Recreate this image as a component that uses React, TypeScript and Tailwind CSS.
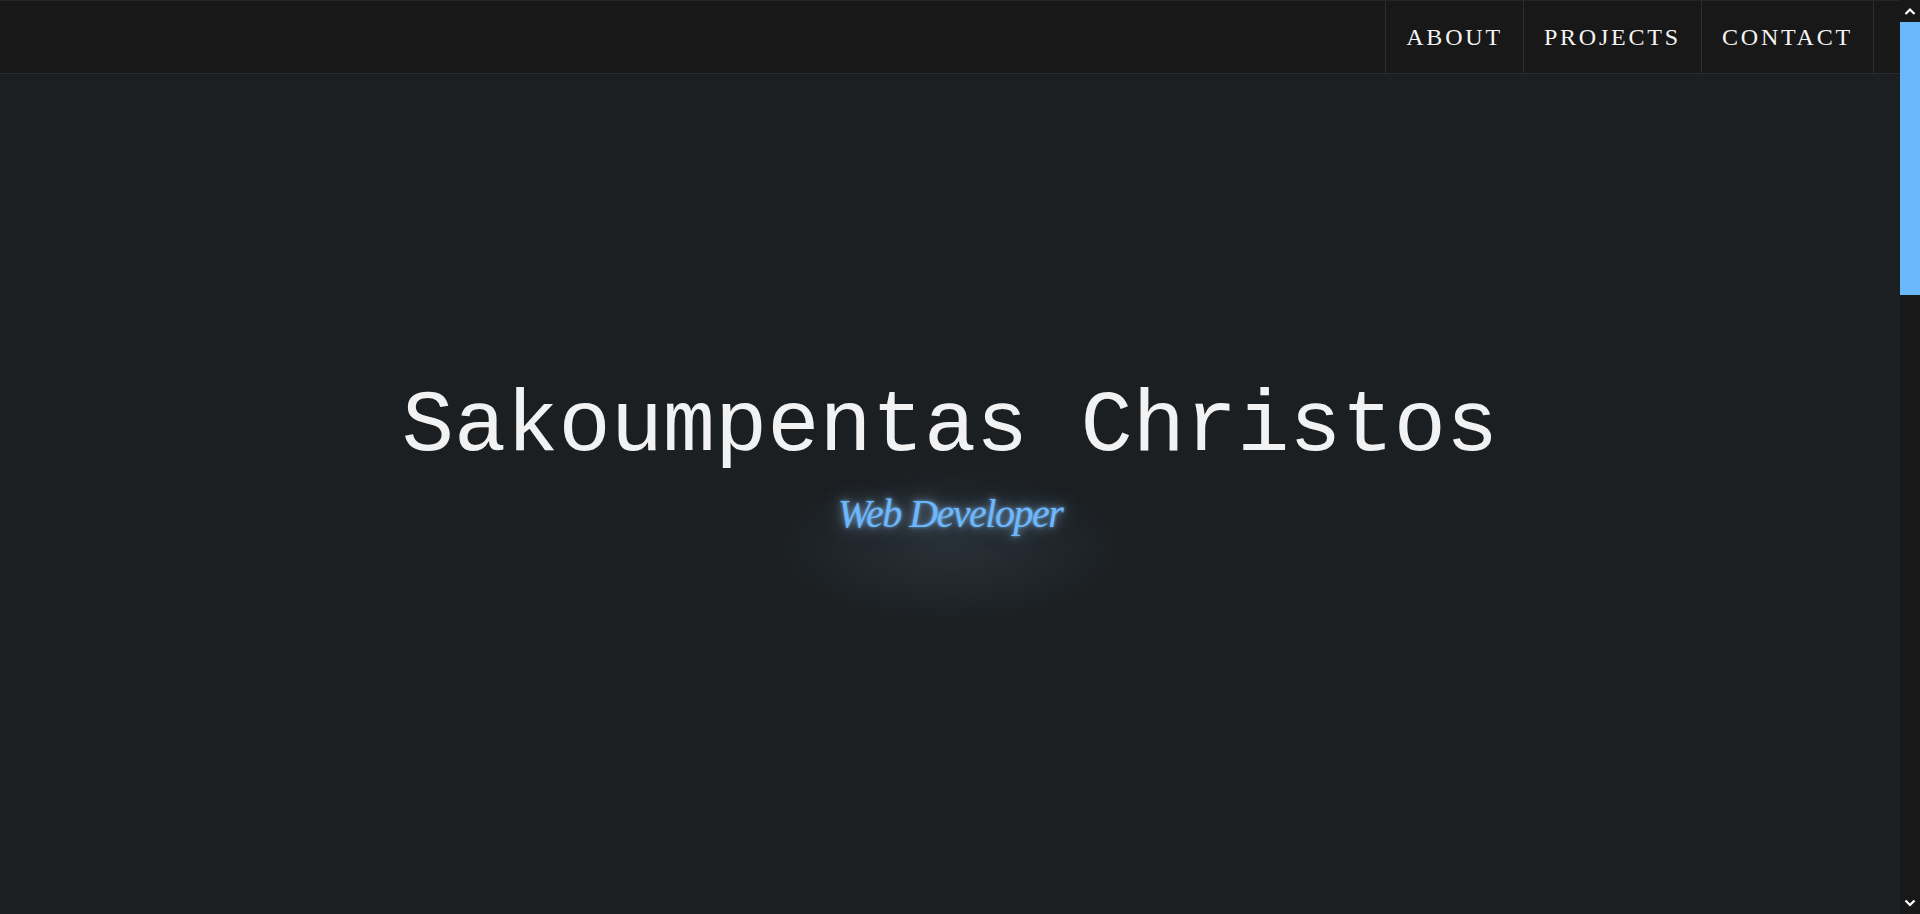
import React from 'react';

const links = ['About', 'Projects', 'Contact'];

function Header() {
  return (
    <header className="h-[74px] shrink-0 border-t border-b border-t-[#24242d] border-b-[#2b2b2b] bg-[#181818]">
      <nav className="flex h-full justify-end pr-[26px]">
        <ul className="flex h-full">
          {links.map((link, i) => (
            <li
              key={link}
              className={`h-full border-l border-[#2e2e2e] ${i === links.length - 1 ? 'border-r' : ''}`}
            >
              <a
                href={`#${link.toLowerCase()}`}
                className="flex h-full items-center px-5 font-['Liberation_Serif','Times_New_Roman',serif] text-[24px] uppercase tracking-[2.8px] text-[#f4f4f4] hover:text-[#6bb7fb]"
              >
                {link}
              </a>
            </li>
          ))}
        </ul>
      </nav>
    </header>
  );
}

function Hero() {
  return (
    <section className="flex flex-1 flex-col items-center justify-center pb-[71px]">
      <h1 className="font-['Liberation_Mono','Courier_New',monospace] text-[87px] font-normal leading-none text-[#f2f2f2]">
        Sakoumpentas Christos
      </h1>
      <p className="relative isolate mt-[23px] font-['Liberation_Serif','Times_New_Roman',serif] text-[40px] italic leading-none tracking-[-1.5px] text-[#6db8fc] [text-shadow:0_0_3px_rgba(110,187,255,0.75),0_0_10px_rgba(160,200,240,0.65),0_0_24px_rgba(160,200,240,0.4)] before:absolute before:-inset-x-[65px] before:-top-[26px] before:-bottom-[90px] before:-z-10 before:bg-[radial-gradient(closest-side,rgba(120,150,180,0.14),rgba(120,150,180,0.06)_60%,transparent)] before:content-['']">
        Web Developer
      </p>
    </section>
  );
}

function Chevron({ down }: { down?: boolean }) {
  return (
    <svg width="20" height="22" viewBox="0 0 20 22" fill="none">
      <path
        d={down ? 'M5.5 8.5L10 13L14.5 8.5' : 'M5.5 14L10 9.5L14.5 14'}
        stroke="white"
        strokeWidth="2.2"
      />
    </svg>
  );
}

function Scrollbar() {
  return (
    <aside className="flex w-5 shrink-0 flex-col bg-[#181818]">
      <div className="h-[22px]">
        <Chevron />
      </div>
      <div className="h-[273px] bg-[#6bb7fb]" />
      <div className="flex-1" />
      <div className="h-[22px]">
        <Chevron down />
      </div>
    </aside>
  );
}

export default function App() {
  return (
    <div className="flex h-screen overflow-hidden bg-[#1b1f22]">
      <div className="flex min-w-0 flex-1 flex-col">
        <Header />
        <Hero />
      </div>
      <Scrollbar />
    </div>
  );
}
